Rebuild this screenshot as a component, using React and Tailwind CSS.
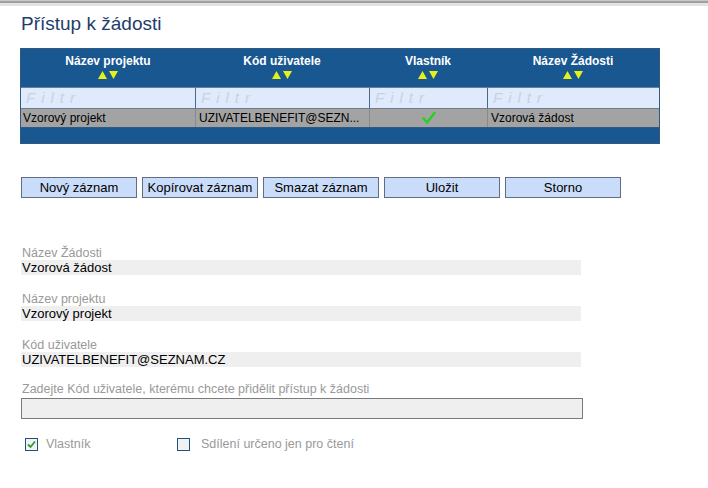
import React, { useState } from 'react';

const columns = [
  { key: 'projekt', label: 'Název projektu', width: 'w-[174px]' },
  { key: 'kod', label: 'Kód uživatele', width: 'w-[174px]' },
  { key: 'vlastnik', label: 'Vlastník', width: 'w-[118px]' },
  { key: 'zadost', label: 'Název Žádosti', width: 'flex-1' },
];

const SortArrows = () => (
  <div className="flex justify-center gap-[2px] mt-[3px]">
    <svg width="9" height="8" viewBox="0 0 9 8"><polygon points="4.5,0 9,8 0,8" fill="#e6f019" /></svg>
    <svg width="9" height="8" viewBox="0 0 9 8"><polygon points="0,0 9,0 4.5,8" fill="#e6f019" /></svg>
  </div>
);

const Check = () => (
  <svg width="14" height="14" viewBox="0 0 14 14">
    <path d="M1.5 7.5 L5 11.5 L12.5 2" stroke="#22d21e" strokeWidth="2.4" fill="none" strokeLinecap="round" strokeLinejoin="round" />
  </svg>
);

const Field = ({ label, value }) => (
  <div className="mb-[17px]">
    <div className="text-[12.5px] leading-[14px] text-[#999999] pl-[1px]">{label}</div>
    <div className="w-[560px] h-[15px] bg-[#efefef] text-[13px] leading-[15px] text-black pl-[1px]">{value}</div>
  </div>
);

export default function App() {
  const [vlastnik, setVlastnik] = useState(true);
  const [sdileni, setSdileni] = useState(false);
  const [kod, setKod] = useState('');

  return (
    <div className="w-[708px] h-[488px] bg-white overflow-hidden" style={{ fontFamily: '"Liberation Sans", Arial, sans-serif' }}>
      <div className="h-[1px] bg-[#c8c8c8]" />
      <div className="h-[2px] bg-[#a0a0a0]" />
      <div className="h-[3px] bg-[#e2e2e2]" />

      <div className="pl-[20px] pt-[7px]">
        <h1 className="text-[19px] leading-[22px] text-[#1f3d6b] pl-[1px]">Přístup k žádosti</h1>

        <div className="mt-[13px] w-[640px] border border-[#2e5a86] bg-[#195791]">
          <div className="flex h-[38px] text-white font-bold text-[12px]">
            {columns.map((c) => (
              <div key={c.key} className={`${c.width} pt-[5px] text-center leading-[14px]`}>
                <div>{c.label}</div>
                <SortArrows />
              </div>
            ))}
          </div>
          <div className="flex h-[21px] bg-[#dfeafc] border-t border-[#6a7f96]">
            {columns.map((c, i) => (
              <div key={c.key} className={`${c.width} ${i > 0 ? 'border-l border-[#4a6a8a]' : ''} pl-[5px] text-[15px] leading-[20px] italic text-[#c8d2e0] tracking-[6px]`}>
                Filtr
              </div>
            ))}
          </div>
          <div className="flex h-[19px] bg-[#a3a3a3] border-t border-[#6e7c8a] text-[12px] leading-[18px] text-black">
            <div className="w-[174px] pl-[2px]">Vzorový projekt</div>
            <div className="w-[174px] pl-[3px] border-l border-[#8a8a8a]">UZIVATELBENEFIT@SEZN...</div>
            <div className="w-[118px] border-l border-[#8a8a8a] flex justify-center items-center"><Check /></div>
            <div className="flex-1 pl-[3px] border-l border-[#8a8a8a]">Vzorová žádost</div>
          </div>
          <div className="h-[16px] bg-[#195791] border-t border-[#2e5a86]" />
        </div>

        <div className="mt-[33px] flex gap-[5px] pl-[1px]">
          {['Nový záznam', 'Kopírovat záznam', 'Smazat záznam', 'Uložit', 'Storno'].map((t) => (
            <button key={t} className="w-[116px] h-[21px] bg-[#c9dcfa] border border-[#5f6e82] text-[13px] leading-[19px] text-black">
              {t}
            </button>
          ))}
        </div>

        <div className="mt-[48px] pl-[1px]">
          <Field label="Název Žádosti" value="Vzorová žádost" />
          <Field label="Název projektu" value="Vzorový projekt" />
          <Field label="Kód uživatele" value="UZIVATELBENEFIT@SEZNAM.CZ" />

          <div className="-mt-[2px] text-[12.5px] leading-[14px] text-[#999999] pl-[1px]">Zadejte Kód uživatele, kterému chcete přidělit přístup k žádosti</div>
          <input
            value={kod}
            onChange={(e) => setKod(e.target.value)}
            className="mt-0 w-[562px] h-[21px] bg-[#efefef] border border-[#7a7a7a] outline-none text-[13px] px-[2px]"
          />

          <div className="mt-[15px] flex items-center text-[12.5px] text-[#999999]">
            <label className="flex items-center pl-[4px] w-[156px] cursor-pointer" onClick={() => setVlastnik(!vlastnik)}>
              <span className="w-[13px] h-[13px] border border-[#1c5180] bg-[#f2f2f2] flex items-center justify-center">
                {vlastnik && (
                  <svg width="9" height="9" viewBox="0 0 9 9"><path d="M1 4.5 L3.5 7 L8 1.5" stroke="#2e9a2e" strokeWidth="1.8" fill="none" /></svg>
                )}
              </span>
              <span className="ml-[8px]">Vlastník</span>
            </label>
            <label className="flex items-center cursor-pointer" onClick={() => setSdileni(!sdileni)}>
              <span className="w-[13px] h-[13px] border border-[#1c5180] bg-[#f2f2f2] flex items-center justify-center">
                {sdileni && (
                  <svg width="9" height="9" viewBox="0 0 9 9"><path d="M1 4.5 L3.5 7 L8 1.5" stroke="#2e9a2e" strokeWidth="1.8" fill="none" /></svg>
                )}
              </span>
              <span className="ml-[11px]">Sdílení určeno jen pro čtení</span>
            </label>
          </div>
        </div>
      </div>
    </div>
  );
}
